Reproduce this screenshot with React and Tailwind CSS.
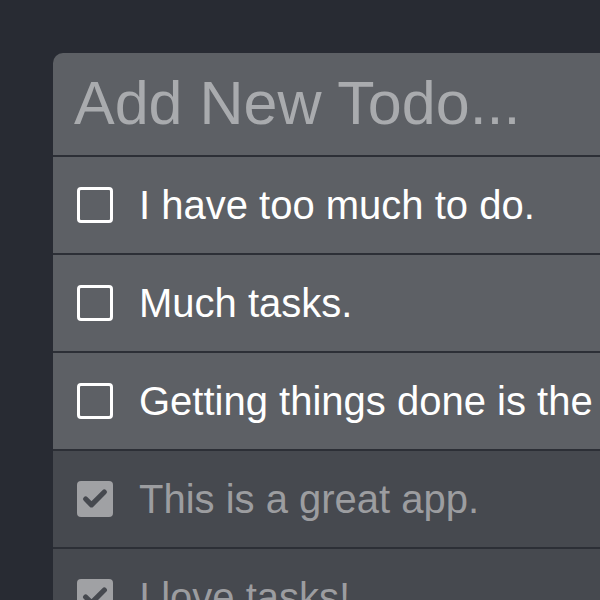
import { Check } from 'lucide-react';

const todos = [
  { id: 1, text: 'I have too much to do.', done: false },
  { id: 2, text: 'Much tasks.', done: false },
  { id: 3, text: 'Getting things done is the best thing ever.', done: false },
  { id: 4, text: 'This is a great app.', done: true },
  { id: 5, text: 'I love tasks!', done: true },
];

const TodoRow = ({ todo }) => (
  <div
    className={`flex items-center h-[98px] border-t-2 border-[#2c2f36] pl-[24px] ${
      todo.done ? 'bg-[#46494f]' : 'bg-[#5d6065]'
    }`}
  >
    {todo.done ? (
      <span className="flex items-center justify-center w-[36px] h-[36px] shrink-0 rounded-[4px] bg-[#a0a1a4]">
        <Check size={28} strokeWidth={4.5} className="text-[#46494f]" />
      </span>
    ) : (
      <span className="w-[36px] h-[36px] shrink-0 rounded-[4px] border-[3px] border-white" />
    )}
    <span
      className={`ml-[26px] whitespace-nowrap text-[40px] ${
        todo.done ? 'text-[#9c9da0]' : 'text-white'
      }`}
    >
      {todo.text}
    </span>
  </div>
);

export default function App() {
  return (
    <div
      className="w-[600px] h-[600px] overflow-hidden bg-[#282b33] pt-[53px] pl-[53px]"
      style={{ fontFamily: "'Liberation Sans', Arial, sans-serif" }}
    >
      <div className="w-[600px] rounded-tl-[10px] overflow-hidden">
        <div className="flex items-center h-[102px] bg-[#5d6065] pl-[21px]">
          <span className="text-[61px] text-[#a9abae] whitespace-nowrap">Add New Todo...</span>
        </div>
        {todos.map((todo) => (
          <TodoRow key={todo.id} todo={todo} />
        ))}
      </div>
    </div>
  );
}
